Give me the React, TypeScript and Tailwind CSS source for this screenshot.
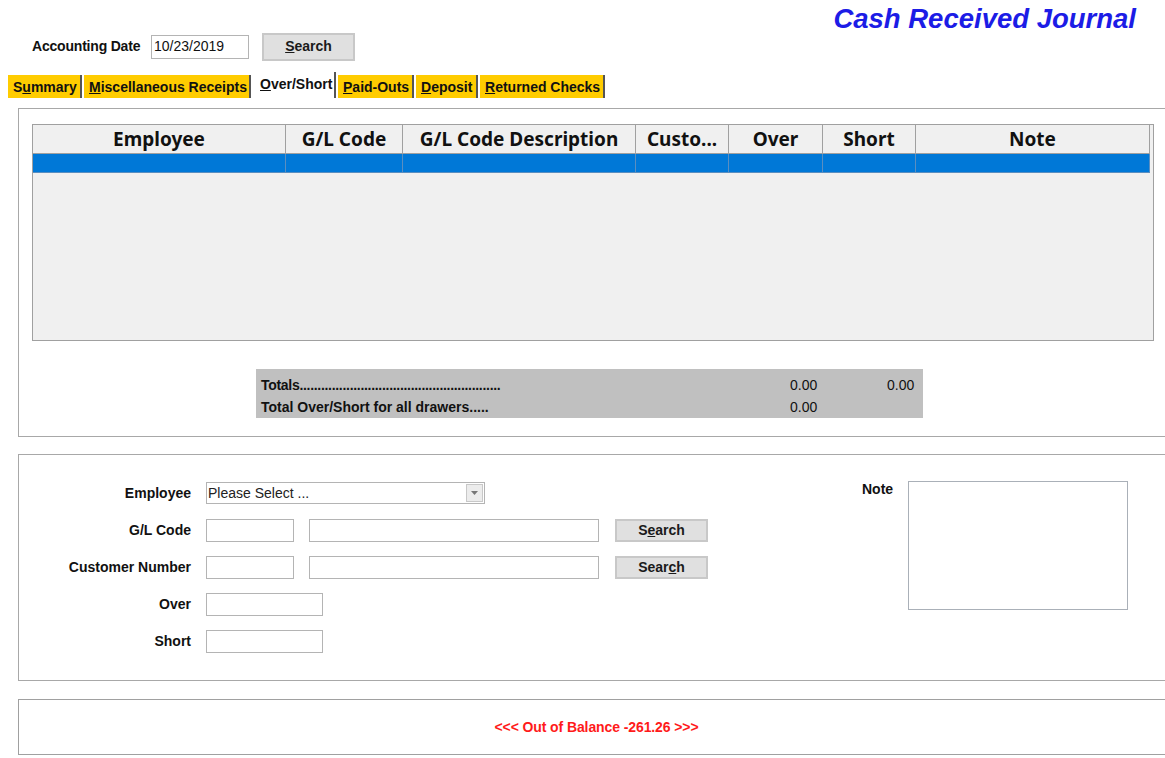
const cols = [
  { label: 'Employee', w: 'w-[253px]' },
  { label: 'G/L Code', w: 'w-[117px]' },
  { label: 'G/L Code Description', w: 'w-[233px]' },
  { label: 'Custo...', w: 'w-[93px]' },
  { label: 'Over', w: 'w-[94px]' },
  { label: 'Short', w: 'w-[93px]' },
  { label: 'Note', w: 'w-[234px]' },
]

const tabs = [
  { pre: 'S', key: 'u', post: 'mmary', w: 'w-[74px]' },
  { pre: '', key: 'M', post: 'iscellaneous Receipts', w: 'w-[167px]' },
  { pre: '', key: 'O', post: 'ver/Short', w: 'w-[78px]', active: true },
  { pre: '', key: 'P', post: 'aid-Outs', w: 'w-[76px]' },
  { pre: '', key: 'D', post: 'eposit', w: 'w-[62px]' },
  { pre: '', key: 'R', post: 'eturned Checks', w: 'w-[125px]' },
]

function Btn({ pre, k, post, w }: { pre: string; k: string; post: string; w: string }) {
  return (
    <button
      className={`${w} bg-[#e0e0e0] border-2 border-[#c8c8c8] text-[14px] font-bold text-[#1a1a1a] flex items-center justify-center`}
    >
      {pre}
      <span className="underline">{k}</span>
      {post}
    </button>
  )
}

function Field({ w }: { w: string }) {
  return <div className={`${w} h-[23px] border border-[#b4b4b4] bg-white`} />
}

export default function App() {
  return (
    <div className="w-[1165px] h-[758px] overflow-hidden bg-white font-['Liberation_Sans',Arial,sans-serif] text-[#111]">
      {/* Header */}
      <div className="flex justify-between h-[62px]">
        <div className="flex items-center pl-[32px] pt-[33px] h-[60px]">
          <span className="text-[14px] font-bold w-[119px] tracking-[-0.2px]">Accounting Date</span>
          <div className="w-[98px] h-[24px] border border-[#b4b4b4] text-[14px] pl-[2px] flex items-center">
            10/23/2019
          </div>
          <div className="ml-[13px]">
            <Btn pre="" k="S" post="earch" w="w-[93px] h-[28px]" />
          </div>
        </div>
        <div className="pr-[29px] pt-[3px] text-[27.5px] font-bold italic text-[#1c1ce6] leading-[32px]">
          Cash Received Journal
        </div>
      </div>

      {/* Tabs */}
      <div className="flex items-end pl-[8px] mt-[10px] h-[26px]">
        {tabs.map((t) => (
          <div
            key={t.key}
            className={
              t.active
                ? `${t.w} h-[26px] ml-[5px] mr-[2px] bg-white border-r-2 border-[#555] text-[14px] font-bold flex items-start pt-[2px] pl-[2px] whitespace-nowrap`
                : `${t.w} h-[23px] mr-[2px] bg-[#ffcc00] border-r-2 border-[#555] text-[14px] font-bold flex items-center pl-[5px] pt-[2px] whitespace-nowrap`
            }
          >
            {t.pre}
            <span className="underline">{t.key}</span>
            {t.post}
          </div>
        ))}
      </div>

      {/* Grid panel */}
      <div className="ml-[18px] mt-[10px] w-[1160px] h-[329px] border border-[#a8a8a8] pl-[13px] pt-[15px]">
        <div className="w-[1122px] h-[217px] border border-[#a0a0a0] bg-[#f0f0f0]">
          <div className="flex h-[29px]">
            {cols.map((c) => (
              <div
                key={c.label}
                className={`${c.w} h-[29px] border-r border-b border-[#a0a0a0] bg-[#f0f0f0] flex items-center justify-center text-[19px] font-bold font-['Noto_Sans',sans-serif] text-[#111]`}
              >
                {c.label}
              </div>
            ))}
          </div>
          <div className="flex h-[19px]">
            {cols.map((c) => (
              <div key={c.label} className={`${c.w} h-[19px] bg-[#0078d7] border-r border-b border-[#5a8ec0]`} />
            ))}
          </div>
        </div>

        <div className="ml-[224px] mt-[28px] w-[667px] h-[49px] bg-[#c0c0c0] text-[14px] pl-[5px] pt-[5px]">
          <div className="flex h-[23px] items-center">
            <span className="font-bold w-[529px] tracking-[-0.3px]">
              Totals........................................................
            </span>
            <span className="w-[97px]">0.00</span>
            <span>0.00</span>
          </div>
          <div className="flex h-[20px] items-center">
            <span className="font-bold w-[529px]">Total Over/Short for all drawers.....</span>
            <span>0.00</span>
          </div>
        </div>
      </div>

      {/* Entry panel */}
      <div className="ml-[18px] mt-[17px] w-[1160px] h-[227px] border border-[#a8a8a8] flex pt-[27px]">
        <div className="grid grid-cols-[172px_auto] auto-rows-[23px] gap-x-[15px] gap-y-[14px] content-start text-[14px]">
          <div className="font-bold text-right flex items-center justify-end">Employee</div>
          <div className="w-[279px] h-[22px] border border-[#b4b4b4] flex items-center justify-between pl-[1px] pr-[1px]">
            <span className="text-[14px] text-[#222]">Please Select ...</span>
            <div className="w-[17px] h-[18px] bg-[#ececec] border border-[#c8c8c8] flex items-center justify-center">
              <svg width="7" height="4" viewBox="0 0 7 4">
                <path d="M0 0h7L3.5 4z" fill="#777" />
              </svg>
            </div>
          </div>

          <div className="font-bold text-right flex items-center justify-end">G/L Code</div>
          <div className="flex items-center">
            <Field w="w-[88px]" />
            <div className="ml-[15px]">
              <Field w="w-[290px]" />
            </div>
            <div className="ml-[16px]">
              <Btn pre="S" k="e" post="arch" w="w-[93px] h-[23px]" />
            </div>
          </div>

          <div className="font-bold text-right flex items-center justify-end">Customer Number</div>
          <div className="flex items-center">
            <Field w="w-[88px]" />
            <div className="ml-[15px]">
              <Field w="w-[290px]" />
            </div>
            <div className="ml-[16px]">
              <Btn pre="Sear" k="c" post="h" w="w-[93px] h-[23px]" />
            </div>
          </div>

          <div className="font-bold text-right flex items-center justify-end">Over</div>
          <Field w="w-[117px]" />

          <div className="font-bold text-right flex items-center justify-end">Short</div>
          <Field w="w-[117px]" />
        </div>

        <div className="flex ml-[154px] -mt-[1px]">
          <span className="text-[14px] font-bold w-[46px] -mt-[2px]">Note</span>
          <div className="w-[220px] h-[129px] border border-[#aab0b8] bg-white" />
        </div>
      </div>

      {/* Balance panel */}
      <div className="ml-[18px] mt-[18px] w-[1160px] h-[56px] border border-[#a0a0a0] flex items-center">
        <span className="w-[1147px] pl-[8px] text-center text-[14px] font-bold text-[#ff1a1a] tracking-[-0.1px]">
          &lt;&lt;&lt; Out of Balance -261.26 &gt;&gt;&gt;
        </span>
      </div>
    </div>
  )
}
